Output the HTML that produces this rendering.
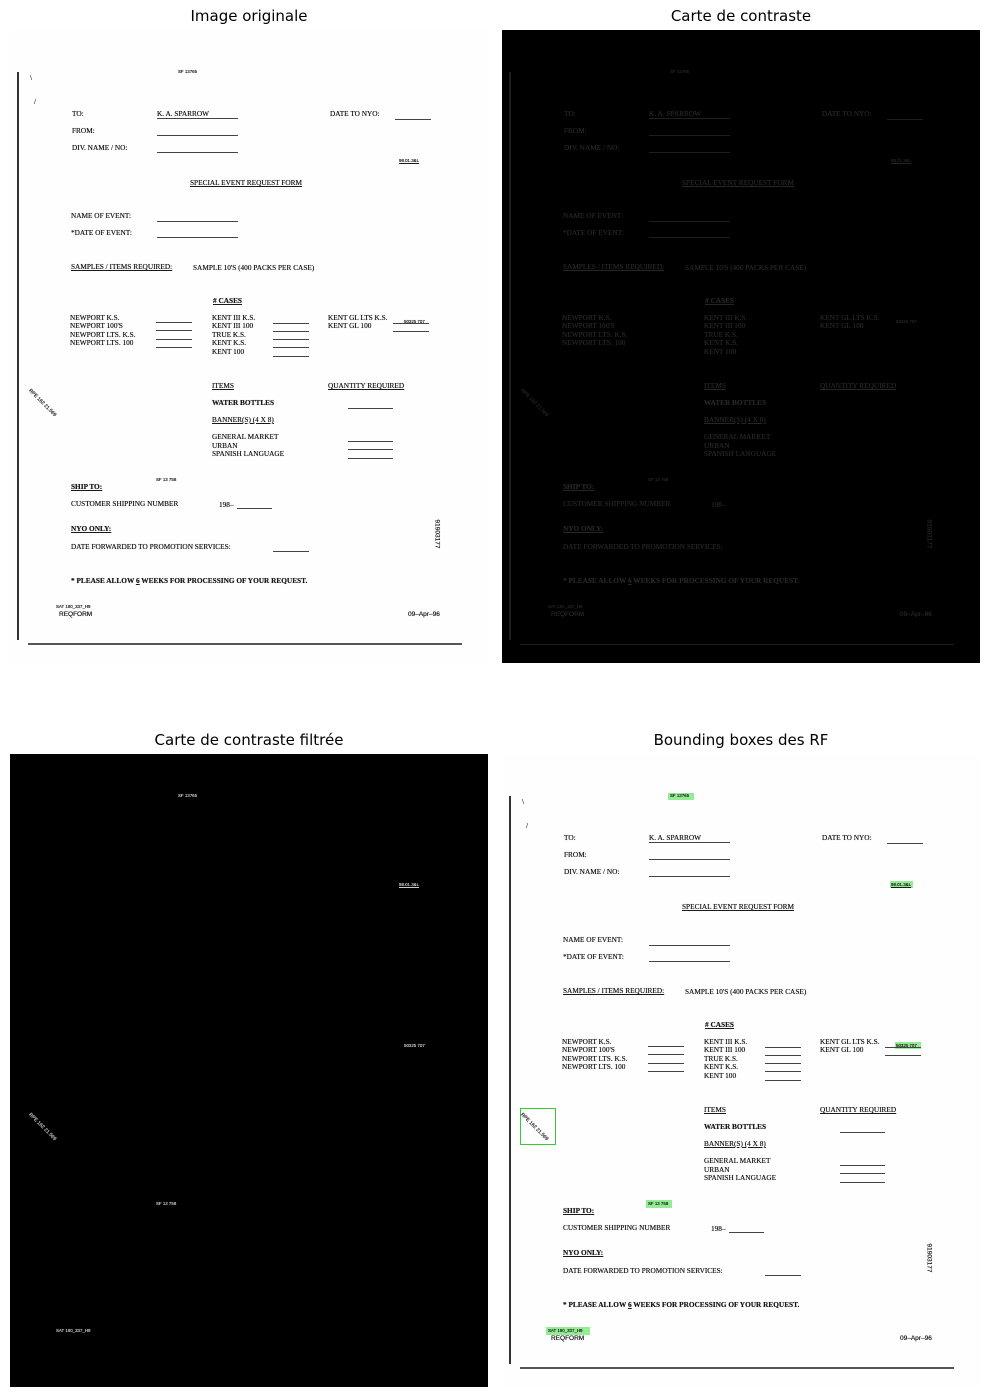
<!DOCTYPE html>
<html><head><meta charset="utf-8"><style>
body{margin:0;background:#fff;width:989px;height:1397px;position:relative;overflow:hidden}
.ttl{position:absolute;font:15px "DejaVu Sans",sans-serif;color:#000;transform:translateX(-50%);white-space:nowrap}
.p{position:absolute;width:478px;height:633px;overflow:hidden}
.doc{position:absolute;left:0;top:0;width:478px;height:633px;background:#fefefe;color:#1a1a1a}
.t{position:absolute;font:7.3px "Liberation Serif",serif;line-height:8px;white-space:nowrap;text-shadow:0 0 .4px currentColor}
.b{font-weight:bold}
.u{text-decoration:underline}
.s{font:4.4px "Liberation Sans",sans-serif;line-height:6px}
.sa{font-family:"Liberation Sans",sans-serif;font-size:6.5px}
.l{position:absolute;height:1px;background:#444}
.v{position:absolute;width:2px;background:#333}
.bl{height:2px;background:#555}
.dark .doc{background:#000;color:#262626}
.dark .l,.dark .v{background:#1e1e1e}
.g{position:absolute;background:rgba(60,220,60,.55)}
.blk{background:#000}
.blk .t{color:#ccc}
</style></head><body>
<div class="ttl" style="left:249px;top:7px">Image originale</div>
<div class="ttl" style="left:741px;top:7px">Carte de contraste</div>
<div class="ttl" style="left:249px;top:731px">Carte de contraste filtrée</div>
<div class="ttl" style="left:741px;top:731px">Bounding boxes des RF</div>

<div class="p" style="left:10px;top:30px"><div class="doc">
<div class="v" style="left:7px;top:42px;height:568px"></div>
<div class="t" style="left:20px;top:44px">\</div><div class="t" style="left:24px;top:68px">/</div>
<div class="t s" style="left:168px;top:39px">SF 13765</div>
<div class="t" style="left:62px;top:80px">TO:</div>
<div class="t" style="left:147px;top:80px">K. A. SPARROW</div><div class="l" style="left:147px;top:88px;width:81px"></div>
<div class="t" style="left:320px;top:80px">DATE TO NYO:</div><div class="l" style="left:385px;top:89px;width:36px"></div>
<div class="t" style="left:62px;top:97px">FROM:</div><div class="l" style="left:147px;top:105px;width:81px"></div>
<div class="t" style="left:62px;top:114px">DIV. NAME / NO:</div><div class="l" style="left:147px;top:122px;width:81px"></div>
<div class="t s u" style="left:389px;top:128px">98.01.3&amp;L</div>
<div class="t u" style="left:180px;top:149px">SPECIAL EVENT REQUEST FORM</div>
<div class="t" style="left:61px;top:182px">NAME OF EVENT:</div><div class="l" style="left:147px;top:191px;width:81px"></div>
<div class="t" style="left:61px;top:199px">*DATE OF EVENT:</div><div class="l" style="left:147px;top:207px;width:81px"></div>
<div class="t u" style="left:61px;top:233px">SAMPLES / ITEMS REQUIRED:</div>
<div class="t" style="left:183px;top:234px">SAMPLE 10'S (400 PACKS PER CASE)</div>
<div class="t b u" style="left:203px;top:267px"># CASES</div>
<div class="t" style="left:60px;top:284px;line-height:8.4px">NEWPORT K.S.<br>NEWPORT 100'S<br>NEWPORT LTS. K.S.<br>NEWPORT LTS. 100</div>
<div class="l" style="left:146px;top:292px;width:36px"></div><div class="l" style="left:146px;top:300px;width:36px"></div><div class="l" style="left:146px;top:309px;width:36px"></div><div class="l" style="left:146px;top:317px;width:36px"></div>
<div class="t" style="left:202px;top:284px;line-height:8.4px">KENT III K.S.<br>KENT III 100<br>TRUE K.S.<br>KENT K.S.<br>KENT 100</div>
<div class="l" style="left:263px;top:293px;width:36px"></div><div class="l" style="left:263px;top:301px;width:36px"></div><div class="l" style="left:263px;top:309px;width:36px"></div><div class="l" style="left:263px;top:317px;width:36px"></div><div class="l" style="left:263px;top:326px;width:36px"></div>
<div class="t" style="left:318px;top:284px;line-height:8.4px">KENT GL LTS K.S.<br>KENT GL 100</div>
<div class="l" style="left:383px;top:293px;width:36px"></div><div class="t s" style="left:394px;top:289px">50325 707</div><div class="l" style="left:383px;top:301px;width:36px"></div>
<div class="t s" style="left:14px;top:370px;transform:rotate(45deg);font-size:5px">RPE 162 21.569</div>
<div class="t u" style="left:202px;top:352px">ITEMS</div><div class="t u" style="left:318px;top:352px">QUANTITY REQUIRED</div>
<div class="t b" style="left:202px;top:369px">WATER BOTTLES</div><div class="l" style="left:338px;top:378px;width:45px"></div>
<div class="t u" style="left:202px;top:386px">BANNER(S) (4 X 8)</div>
<div class="t" style="left:202px;top:403px;line-height:8.5px">GENERAL MARKET<br>URBAN<br>SPANISH LANGUAGE</div>
<div class="l" style="left:338px;top:411px;width:45px"></div><div class="l" style="left:338px;top:419px;width:45px"></div><div class="l" style="left:338px;top:428px;width:45px"></div>
<div class="t s" style="left:146px;top:447px">SF 13 758</div>
<div class="t u b" style="left:61px;top:453px">SHIP TO:</div>
<div class="t" style="left:61px;top:470px">CUSTOMER SHIPPING NUMBER</div><div class="t" style="left:209px;top:471px">198–</div><div class="l" style="left:227px;top:478px;width:35px"></div>
<div class="t u b" style="left:61px;top:495px">NYO ONLY:</div>
<div class="t" style="left:61px;top:513px">DATE FORWARDED TO PROMOTION SERVICES:</div><div class="l" style="left:263px;top:521px;width:36px"></div>
<div class="t sa" style="left:412px;top:500px;transform:rotate(90deg)">91903177</div>
<div class="t b" style="left:61px;top:547px">* PLEASE ALLOW <u>6</u> WEEKS FOR PROCESSING OF YOUR REQUEST.</div>
<div class="t s" style="left:46px;top:574px">SAT 190_337_H9</div>
<div class="t sa" style="left:49px;top:581px">REQFORM</div><div class="t sa" style="left:398px;top:581px">09–Apr–96</div>
<div class="l bl" style="left:18px;top:613px;width:434px"></div>
</div></div>

<div class="p dark" style="left:502px;top:30px"><div class="doc">
<div class="v" style="left:7px;top:42px;height:568px"></div>
<div class="t s" style="left:168px;top:39px">SF 13765</div>
<div class="t" style="left:62px;top:80px">TO:</div>
<div class="t" style="left:147px;top:80px">K. A. SPARROW</div><div class="l" style="left:147px;top:88px;width:81px"></div>
<div class="t" style="left:320px;top:80px">DATE TO NYO:</div><div class="l" style="left:385px;top:89px;width:36px"></div>
<div class="t" style="left:62px;top:97px">FROM:</div><div class="l" style="left:147px;top:105px;width:81px"></div>
<div class="t" style="left:62px;top:114px">DIV. NAME / NO:</div><div class="l" style="left:147px;top:122px;width:81px"></div>
<div class="t s u" style="left:389px;top:128px">98.01.3&amp;L</div>
<div class="t u" style="left:180px;top:149px">SPECIAL EVENT REQUEST FORM</div>
<div class="t" style="left:61px;top:182px">NAME OF EVENT:</div><div class="l" style="left:147px;top:191px;width:81px"></div>
<div class="t" style="left:61px;top:199px">*DATE OF EVENT:</div><div class="l" style="left:147px;top:207px;width:81px"></div>
<div class="t u" style="left:61px;top:233px">SAMPLES / ITEMS REQUIRED:</div>
<div class="t" style="left:183px;top:234px">SAMPLE 10'S (400 PACKS PER CASE)</div>
<div class="t b u" style="left:203px;top:267px"># CASES</div>
<div class="t" style="left:60px;top:284px;line-height:8.4px">NEWPORT K.S.<br>NEWPORT 100'S<br>NEWPORT LTS. K.S.<br>NEWPORT LTS. 100</div>
<div class="t" style="left:202px;top:284px;line-height:8.4px">KENT III K.S.<br>KENT III 100<br>TRUE K.S.<br>KENT K.S.<br>KENT 100</div>
<div class="t" style="left:318px;top:284px;line-height:8.4px">KENT GL LTS K.S.<br>KENT GL 100</div>
<div class="t s" style="left:394px;top:289px">50325 707</div>
<div class="t s" style="left:14px;top:370px;transform:rotate(45deg);font-size:5px">RPE 162 21.569</div>
<div class="t u" style="left:202px;top:352px">ITEMS</div><div class="t u" style="left:318px;top:352px">QUANTITY REQUIRED</div>
<div class="t b" style="left:202px;top:369px">WATER BOTTLES</div>
<div class="t u" style="left:202px;top:386px">BANNER(S) (4 X 8)</div>
<div class="t" style="left:202px;top:403px;line-height:8.5px">GENERAL MARKET<br>URBAN<br>SPANISH LANGUAGE</div>
<div class="t s" style="left:146px;top:447px">SF 13 758</div>
<div class="t u b" style="left:61px;top:453px">SHIP TO:</div>
<div class="t" style="left:61px;top:470px">CUSTOMER SHIPPING NUMBER</div><div class="t" style="left:209px;top:471px">198–</div>
<div class="t u b" style="left:61px;top:495px">NYO ONLY:</div>
<div class="t" style="left:61px;top:513px">DATE FORWARDED TO PROMOTION SERVICES:</div>
<div class="t sa" style="left:412px;top:500px;transform:rotate(90deg)">91903177</div>
<div class="t b" style="left:61px;top:547px">* PLEASE ALLOW <u>6</u> WEEKS FOR PROCESSING OF YOUR REQUEST.</div>
<div class="t s" style="left:46px;top:574px">SAT 190_337_H9</div>
<div class="t sa" style="left:49px;top:581px">REQFORM</div><div class="t sa" style="left:398px;top:581px">09–Apr–96</div>
<div class="l" style="left:18px;top:614px;width:434px"></div>
</div></div>

<div class="p blk" style="left:10px;top:754px">
<div class="t s" style="left:168px;top:39px">SF 13765</div>
<div class="t s u" style="left:389px;top:128px">98.01.3&amp;L</div>
<div class="t s" style="left:394px;top:289px">50325 707</div>
<div class="t s" style="left:14px;top:370px;transform:rotate(45deg);font-size:5px">RPE 162 21.569</div>
<div class="t s" style="left:146px;top:447px">SF 13 758</div>
<div class="t s" style="left:46px;top:574px">SAT 190_337_H9</div>
</div>

<div class="p" style="left:502px;top:754px"><div class="doc">
<div class="g" style="left:166px;top:39px;width:26px;height:7px"></div>
<div class="g" style="left:388px;top:127px;width:23px;height:7px"></div>
<div class="g" style="left:393px;top:288px;width:26px;height:7px"></div>
<div class="g" style="left:144px;top:446px;width:26px;height:8px"></div>
<div class="g" style="left:44px;top:573px;width:44px;height:8px"></div>
<div style="position:absolute;left:18px;top:354px;width:34px;height:35px;border:1px solid #3c3"></div>
<div class="v" style="left:7px;top:42px;height:568px"></div>
<div class="t" style="left:20px;top:44px">\</div><div class="t" style="left:24px;top:68px">/</div>
<div class="t s" style="left:168px;top:39px">SF 13765</div>
<div class="t" style="left:62px;top:80px">TO:</div>
<div class="t" style="left:147px;top:80px">K. A. SPARROW</div><div class="l" style="left:147px;top:88px;width:81px"></div>
<div class="t" style="left:320px;top:80px">DATE TO NYO:</div><div class="l" style="left:385px;top:89px;width:36px"></div>
<div class="t" style="left:62px;top:97px">FROM:</div><div class="l" style="left:147px;top:105px;width:81px"></div>
<div class="t" style="left:62px;top:114px">DIV. NAME / NO:</div><div class="l" style="left:147px;top:122px;width:81px"></div>
<div class="t s u" style="left:389px;top:128px">98.01.3&amp;L</div>
<div class="t u" style="left:180px;top:149px">SPECIAL EVENT REQUEST FORM</div>
<div class="t" style="left:61px;top:182px">NAME OF EVENT:</div><div class="l" style="left:147px;top:191px;width:81px"></div>
<div class="t" style="left:61px;top:199px">*DATE OF EVENT:</div><div class="l" style="left:147px;top:207px;width:81px"></div>
<div class="t u" style="left:61px;top:233px">SAMPLES / ITEMS REQUIRED:</div>
<div class="t" style="left:183px;top:234px">SAMPLE 10'S (400 PACKS PER CASE)</div>
<div class="t b u" style="left:203px;top:267px"># CASES</div>
<div class="t" style="left:60px;top:284px;line-height:8.4px">NEWPORT K.S.<br>NEWPORT 100'S<br>NEWPORT LTS. K.S.<br>NEWPORT LTS. 100</div>
<div class="l" style="left:146px;top:292px;width:36px"></div><div class="l" style="left:146px;top:300px;width:36px"></div><div class="l" style="left:146px;top:309px;width:36px"></div><div class="l" style="left:146px;top:317px;width:36px"></div>
<div class="t" style="left:202px;top:284px;line-height:8.4px">KENT III K.S.<br>KENT III 100<br>TRUE K.S.<br>KENT K.S.<br>KENT 100</div>
<div class="l" style="left:263px;top:293px;width:36px"></div><div class="l" style="left:263px;top:301px;width:36px"></div><div class="l" style="left:263px;top:309px;width:36px"></div><div class="l" style="left:263px;top:317px;width:36px"></div><div class="l" style="left:263px;top:326px;width:36px"></div>
<div class="t" style="left:318px;top:284px;line-height:8.4px">KENT GL LTS K.S.<br>KENT GL 100</div>
<div class="l" style="left:383px;top:293px;width:36px"></div><div class="t s" style="left:394px;top:289px">50325 707</div><div class="l" style="left:383px;top:301px;width:36px"></div>
<div class="t s" style="left:14px;top:370px;transform:rotate(45deg);font-size:5px">RPE 162 21.569</div>
<div class="t u" style="left:202px;top:352px">ITEMS</div><div class="t u" style="left:318px;top:352px">QUANTITY REQUIRED</div>
<div class="t b" style="left:202px;top:369px">WATER BOTTLES</div><div class="l" style="left:338px;top:378px;width:45px"></div>
<div class="t u" style="left:202px;top:386px">BANNER(S) (4 X 8)</div>
<div class="t" style="left:202px;top:403px;line-height:8.5px">GENERAL MARKET<br>URBAN<br>SPANISH LANGUAGE</div>
<div class="l" style="left:338px;top:411px;width:45px"></div><div class="l" style="left:338px;top:419px;width:45px"></div><div class="l" style="left:338px;top:428px;width:45px"></div>
<div class="t s" style="left:146px;top:447px">SF 13 758</div>
<div class="t u b" style="left:61px;top:453px">SHIP TO:</div>
<div class="t" style="left:61px;top:470px">CUSTOMER SHIPPING NUMBER</div><div class="t" style="left:209px;top:471px">198–</div><div class="l" style="left:227px;top:478px;width:35px"></div>
<div class="t u b" style="left:61px;top:495px">NYO ONLY:</div>
<div class="t" style="left:61px;top:513px">DATE FORWARDED TO PROMOTION SERVICES:</div><div class="l" style="left:263px;top:521px;width:36px"></div>
<div class="t sa" style="left:412px;top:500px;transform:rotate(90deg)">91903177</div>
<div class="t b" style="left:61px;top:547px">* PLEASE ALLOW <u>6</u> WEEKS FOR PROCESSING OF YOUR REQUEST.</div>
<div class="t s" style="left:46px;top:574px">SAT 190_337_H9</div>
<div class="t sa" style="left:49px;top:581px">REQFORM</div><div class="t sa" style="left:398px;top:581px">09–Apr–96</div>
<div class="l bl" style="left:18px;top:613px;width:434px"></div>
</div></div>
</body></html>
